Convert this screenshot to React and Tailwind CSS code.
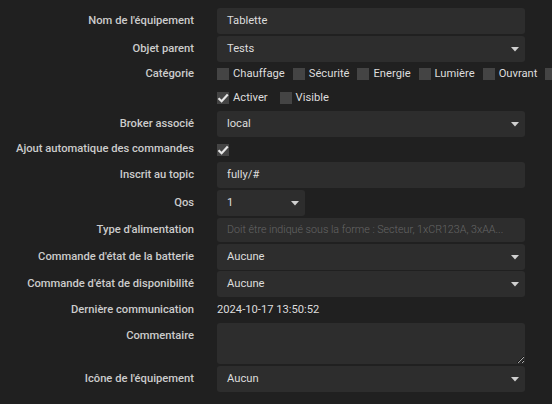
import { useState } from "react";

const CATEGORIES = [
  { label: "Chauffage", checked: false },
  { label: "Sécurité", checked: false },
  { label: "Energie", checked: false },
  { label: "Lumière", checked: false },
  { label: "Ouvrant", checked: false },
  { label: "Automatisme", checked: false },
];

function Check({ checked }) {
  return (
    <span className="relative inline-block w-[12px] h-[12px] bg-[#444444] shrink-0">
      {checked && (
        <svg viewBox="0 0 12 12" className="absolute left-0 top-0 w-[12px] h-[12px]">
          <path d="M1.5 6.2 L4.6 9.2 L10.8 2.6" fill="none" stroke="#e6e6e6" strokeWidth="2.2" />
        </svg>
      )}
    </span>
  );
}

function Box({ label, checked }) {
  return (
    <span className="flex items-center gap-[4px] mr-[8px] whitespace-nowrap">
      <Check checked={checked} />
      <span>{label}</span>
    </span>
  );
}

function Row({ label, h, mt, top, children }) {
  return (
    <div className={`flex ${mt} ${h}`}>
      <div className={`w-[194px] shrink-0 text-right font-medium text-[#cccccc] ${top ? "pt-[5px]" : "self-center"}`}>
        {label}
      </div>
      <div className="ml-[23px] w-[308px] shrink-0 flex items-center">{children}</div>
    </div>
  );
}

function Input({ value, placeholder }) {
  return (
    <div className="w-full h-full bg-[#2d2d2d] rounded-[3px] pl-[10px] pr-[6px] flex items-center text-[#dddddd] overflow-hidden whitespace-nowrap">
      {value ? value : <span className="text-[#666666] text-[10.7px] font-light overflow-hidden">{placeholder}</span>}
    </div>
  );
}

function Select({ value, w = "w-full" }) {
  return (
    <div className={`${w} h-full bg-[#2d2d2d] rounded-[3px] pl-[10px] pr-[6px] flex items-center justify-between text-[#dddddd]`}>
      <span>{value}</span>
      <svg width="8" height="5" viewBox="0 0 8 5">
        <path d="M0 0 H8 L4 4.5 Z" fill="#cfcfcf" />
      </svg>
    </div>
  );
}

export default function App() {
  const [comment, setComment] = useState("");
  return (
    <div className="w-[552px] h-[404px] bg-[#202020] overflow-hidden pt-[8px] text-[11.2px] text-[#dddddd]" style={{ fontFamily: "Roboto, 'Liberation Sans', sans-serif" }}>
      <Row label="Nom de l'équipement" h="h-[26px]" mt="">
        <Input value="Tablette" />
      </Row>
      <Row label="Objet parent" h="h-[26px]" mt="mt-[2px]">
        <Select value="Tests" />
      </Row>
      <Row label="Catégorie" h="h-[20px]" mt="mt-[2px]">
        <div className="flex items-center">
          {CATEGORIES.map((c) => (
            <Box key={c.label} label={c.label} checked={c.checked} />
          ))}
        </div>
      </Row>
      <Row label="" h="h-[24px]" mt="mt-[2px]">
        <div className="flex items-center">
          <Box label="Activer" checked />
          <span className="ml-[4px]">
            <Box label="Visible" />
          </span>
        </div>
      </Row>
      <Row label="Broker associé" h="h-[26px]" mt="mt-[1px]">
        <Select value="local" />
      </Row>
      <Row label="Ajout automatique des commandes" h="h-[21px]" mt="mt-[2px]">
        <Check checked />
      </Row>
      <Row label="Inscrit au topic" h="h-[26px]" mt="mt-[2px]">
        <Input value="fully/#" />
      </Row>
      <Row label="Qos" h="h-[26px]" mt="mt-[2px]">
        <Select value="1" w="w-[88px]" />
      </Row>
      <Row label="Type d'alimentation" h="h-[24px]" mt="mt-[2px]">
        <Input placeholder="Doit être indiqué sous la forme : Secteur, 1xCR123A, 3xAA..." />
      </Row>
      <Row label="Commande d'état de la batterie" h="h-[26px]" mt="mt-[2px]">
        <Select value="Aucune" />
      </Row>
      <Row label="Commande d'état de disponibilité" h="h-[26px]" mt="mt-[1px]">
        <Select value="Aucune" />
      </Row>
      <Row label="Dernière communication" h="h-[22px]" mt="mt-[2px]">
        <span className="text-[#dddddd]">2024-10-17 13:50:52</span>
      </Row>
      <Row label="Commentaire" h="h-[41px]" mt="mt-[2px]" top>
        <textarea
          value={comment}
          onChange={(e) => setComment(e.target.value)}
          className="w-full h-full bg-[#2d2d2d] rounded-[3px] outline-none text-[#dddddd] px-[10px] py-[4px] [color-scheme:dark]"
        />
      </Row>
      <Row label="Icône de l'équipement" h="h-[26px]" mt="mt-[2px]">
        <Select value="Aucun" />
      </Row>
    </div>
  );
}
